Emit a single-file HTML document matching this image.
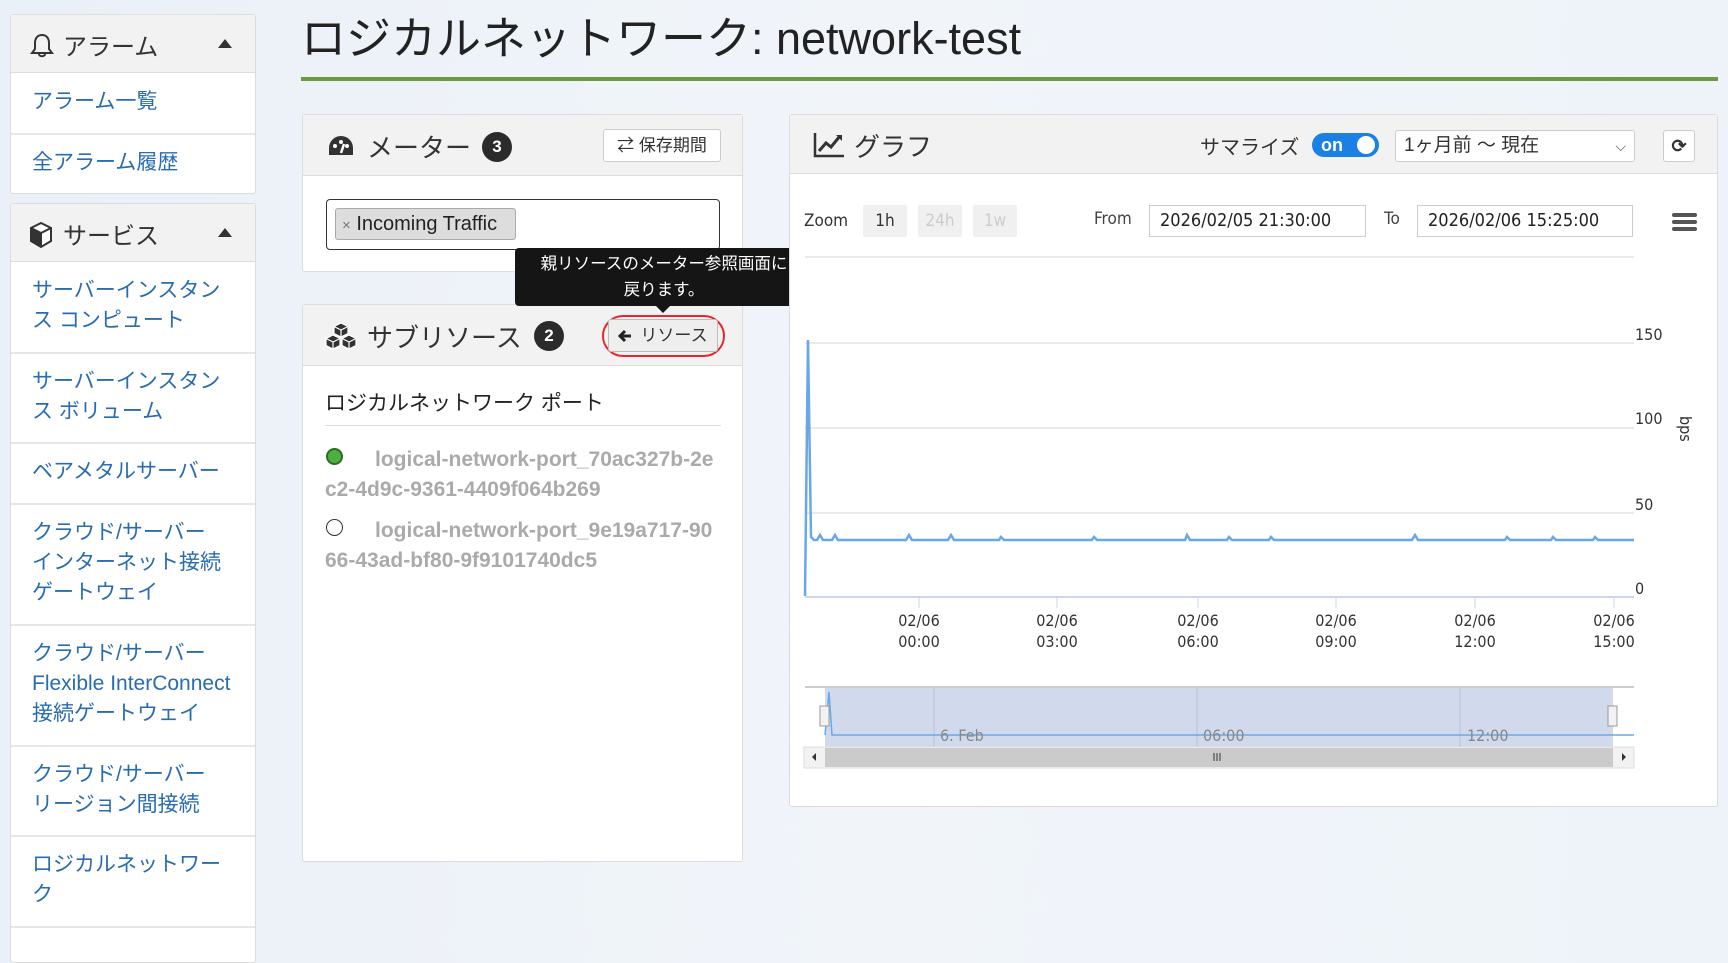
<!DOCTYPE html>
<html><head><meta charset="utf-8">
<style>
*{box-sizing:border-box;margin:0;padding:0}
body{width:1728px;height:940px;overflow:hidden;background:linear-gradient(90deg,#eaf0f7,#f1f5fa 50%,#eef3f9);font-family:"Liberation Sans","Noto Sans CJK JP",sans-serif;position:relative;color:#333}
.a{position:absolute}
.panel{position:absolute;background:#fff;border:1px solid #dcdcdc;border-radius:3px}
.ph{position:absolute;left:0;right:0;top:0;background:#f2f2f2;border-bottom:1px solid #ddd}
.sb a{position:absolute;left:21px;color:#2a6cb0;font-size:21px;line-height:30px;text-decoration:none;white-space:nowrap}
.sep{position:absolute;left:0;right:0;height:2px;background:#e6e6e6}
.badge{position:absolute;width:30px;height:30px;border-radius:50%;background:#2b2b2b;color:#fff;font-weight:bold;font-size:17px;text-align:center;line-height:30px}
.btn{position:absolute;border:1px solid #ccc;border-radius:3px;background:#fff;font-size:17px;text-align:center;white-space:nowrap}
.port{position:absolute;left:22px;width:398px;font-weight:bold;color:#aaa;font-size:21px;line-height:30px;text-indent:50px;word-break:break-all}
.zb{position:absolute;top:205px;height:32px;width:44px;background:#f0f0f0;border-radius:2px;font-size:17px;text-align:center;line-height:32px;font-family:"DejaVu Sans Condensed","Liberation Sans",sans-serif}
.inp{position:absolute;top:205px;height:32px;border:1px solid #ccc;font-size:18px;line-height:30px;padding-left:10px;font-family:"DejaVu Sans Condensed","Liberation Sans",sans-serif;color:#222}
</style></head><body>

<div class="panel sb" style="left:10px;top:14px;width:246px;height:180px">
 <div class="ph" style="height:58px"></div>
 <svg class="a" style="left:18px;top:17px" width="26" height="28" viewBox="0 0 26 28"><path d="M13 3c-5 0-7 4-7 8v6l-3 4h20l-3-4v-6c0-4-2-8-7-8z M10 22c0 3 6 3 6 0" fill="none" stroke="#333" stroke-width="2"/></svg>
 <div class="a" style="left:52px;top:12px;font-size:24px">アラーム</div>
 <div class="a" style="left:207px;top:24px;width:0;height:0;border-left:7px solid transparent;border-right:7px solid transparent;border-bottom:9px solid #333"></div>
 <a style="top:72px">アラーム一覧</a>
 <div class="sep" style="top:118px"></div>
 <a style="top:133px">全アラーム履歴</a>
</div>
<div class="panel sb" style="left:10px;top:203px;width:246px;height:760px">
 <div class="ph" style="height:58px"></div>
 <svg class="a" style="left:17px;top:17px" width="26" height="28" viewBox="0 0 26 28"><path d="M13 2L3 7v13l10 6 10-6V7z" fill="#fff" stroke="#333" stroke-width="2"/><path d="M3 7l10 5 10-5M13 12v14" fill="none" stroke="#333" stroke-width="2"/><path d="M3 7l10 5v14L3 20z" fill="#333"/></svg>
 <div class="a" style="left:52px;top:12px;font-size:24px">サービス</div>
 <div class="a" style="left:207px;top:24px;width:0;height:0;border-left:7px solid transparent;border-right:7px solid transparent;border-bottom:9px solid #333"></div>
 <a style="top:72px">サーバーインスタン<br>ス コンピュート</a>
 <div class="sep" style="top:148px"></div>
 <a style="top:163px">サーバーインスタン<br>ス ボリューム</a>
 <div class="sep" style="top:238px"></div>
 <a style="top:253px">ベアメタルサーバー</a>
 <div class="sep" style="top:299px"></div>
 <a style="top:314px">クラウド/サーバー<br>インターネット接続<br>ゲートウェイ</a>
 <div class="sep" style="top:420px"></div>
 <a style="top:435px">クラウド/サーバー<br>Flexible InterConnect<br>接続ゲートウェイ</a>
 <div class="sep" style="top:541px"></div>
 <a style="top:556px">クラウド/サーバー<br>リージョン間接続</a>
 <div class="sep" style="top:631px"></div>
 <a style="top:646px">ロジカルネットワー<br>ク</a>
 <div class="sep" style="top:722px"></div>
</div>

<div class="a" style="left:301px;top:9px;font-size:45px;line-height:60px;color:#222;white-space:nowrap">ロジカルネットワーク: network-test</div>
<div class="a" style="left:301px;top:77px;width:1417px;height:4px;background:#6b9b3a"></div>

<div class="panel" style="left:302px;top:114px;width:441px;height:158px">
 <div class="ph" style="height:61px"></div>
 <svg class="a" style="left:24px;top:19px" width="28" height="24" viewBox="0 0 28 24"><path d="M14 2A12 12 0 0 0 2 14v7h24v-7A12 12 0 0 0 14 2z" fill="#333"/><circle cx="8" cy="12" r="2" fill="#fff"/><circle cx="14" cy="8" r="2" fill="#fff"/><circle cx="20" cy="12" r="2" fill="#fff"/><path d="M14 19l3-9" stroke="#fff" stroke-width="2.5"/></svg>
 <div class="a" style="left:64px;top:13px;font-size:26px">メーター</div>
 <div class="badge" style="left:179px;top:17px">3</div>
 <div class="btn" style="left:300px;top:14px;width:118px;height:33px;line-height:31px">⇄ 保存期間</div>
 <div class="a" style="left:23px;top:84px;width:394px;height:51px;border:1px solid #333;border-radius:4px"></div>
 <div class="a" style="left:32px;top:93px;width:181px;height:32px;background:#ddd;border:1px solid #aaa;border-radius:3px;font-size:20px;line-height:30px;padding-left:6px;color:#222;white-space:nowrap"><span style="color:#777;font-size:15px">×</span> Incoming Traffic</div>
</div>

<div class="panel" style="left:302px;top:304px;width:441px;height:558px">
 <div class="ph" style="height:61px"></div>
 <svg class="a" style="left:21px;top:17px" width="34" height="28" viewBox="0 0 34 28"><g fill="#333" stroke="#fff" stroke-width="1.2"><path d="M17 1l7 3.5v7l-7 3.5-7-3.5v-7z"/><path d="M9 13l7 3.5v7L9 27l-7-3.5v-7z"/><path d="M25 13l7 3.5v7L25 27l-7-3.5v-7z"/></g><g stroke="#fff" stroke-width="1.2" fill="none"><path d="M10 4.5l7 3.5 7-3.5M17 8v7"/><path d="M2 16.5l7 3.5 7-3.5M9 20v7"/><path d="M18 16.5l7 3.5 7-3.5M25 20v7"/></g></svg>
 <div class="a" style="left:64px;top:13px;font-size:26px">サブリソース</div>
 <div class="badge" style="left:231px;top:16px">2</div>
 <div class="a" style="left:299px;top:10px;width:123px;height:42px;border:2px solid #e8262a;border-radius:21px"></div>
 <div class="btn" style="left:305px;top:14px;width:110px;height:33px;line-height:31px;background:#eee;border-color:#bbb;padding-left:22px">リソース</div>
 <svg class="a" style="left:314px;top:23px" width="16" height="16" viewBox="0 0 16 16"><path d="M14 8H4M8 3L3 8l5 5" fill="none" stroke="#222" stroke-width="3"/></svg>
 <div class="a" style="left:22px;top:82px;font-size:21px;color:#222">ロジカルネットワーク ポート</div>
 <div class="a" style="left:22px;top:120px;width:396px;height:1px;background:#ddd"></div>
 <div class="a" style="left:23px;top:143px;width:17px;height:17px;border-radius:50%;background:#4caf3f;border:2px solid #2d6b26"></div>
 <div class="port" style="top:140px">logical-network-port_70ac327b-2ec2-4d9c-9361-4409f064b269</div>
 <div class="a" style="left:23px;top:214px;width:17px;height:17px;border-radius:50%;border:1.5px solid #333"></div>
 <div class="port" style="top:211px">logical-network-port_9e19a717-9066-43ad-bf80-9f9101740dc5</div>
</div>

<div class="a" style="left:515px;top:248px;width:298px;height:58px;background:#151515;border-radius:4px;color:#fff;font-size:16.5px;line-height:26px;text-align:center;padding-top:3px;white-space:nowrap">親リソースのメーター参照画面に<br>戻ります。</div>
<div class="a" style="left:656px;top:306px;width:0;height:0;border-left:7px solid transparent;border-right:7px solid transparent;border-top:7px solid #151515"></div>

<div class="panel" style="left:789px;top:114px;width:929px;height:693px">
 <div class="ph" style="height:59px"></div>
 <svg class="a" style="left:23px;top:17px" width="32" height="26" viewBox="0 0 32 26"><path d="M2 1v23h29" fill="none" stroke="#333" stroke-width="2.5"/><path d="M6 19l7-8 5 4 9-11" fill="none" stroke="#333" stroke-width="3"/><path d="M23 3h6v6z" fill="#333"/></svg>
 <div class="a" style="left:64px;top:12px;font-size:26px">グラフ</div>
 <div class="a" style="left:410px;top:16px;font-size:20px">サマライズ</div>
 <div class="a" style="left:522px;top:18px;width:67px;height:24px;border-radius:12px;background:#1a80e5;color:#fff;font-weight:bold;font-size:18px;line-height:24px;padding-left:9px">on<div class="a" style="right:4px;top:3px;width:18px;height:18px;border-radius:50%;background:#fff"></div></div>
 <div class="a" style="left:605px;top:15px;width:240px;height:32px;border:1px solid #ccc;border-radius:3px;background:#fff;font-size:19px;line-height:30px;padding-left:8px">1ヶ月前 〜 現在<span class="a" style="right:8px;top:0;font-size:14px;color:#555">&#x2335;</span></div>
 <div class="btn" style="left:873px;top:15px;width:32px;height:32px;line-height:30px;font-size:18px;font-weight:bold">⟳</div>
</div>

<div class="a" style="left:804px;top:211px;font-size:17px;color:#333;font-family:'DejaVu Sans Condensed','Liberation Sans',sans-serif">Zoom</div>
<div class="zb" style="left:863px;color:#333">1h</div>
<div class="zb" style="left:918px;color:#ccc">24h</div>
<div class="zb" style="left:973px;color:#ccc">1w</div>
<div class="a" style="left:1094px;top:209px;font-size:17px;color:#444;font-family:'DejaVu Sans Condensed','Liberation Sans',sans-serif">From</div>
<div class="inp" style="left:1149px;width:217px">2026/02/05 21:30:00</div>
<div class="a" style="left:1384px;top:209px;font-size:17px;color:#444;font-family:'DejaVu Sans Condensed','Liberation Sans',sans-serif">To</div>
<div class="inp" style="left:1417px;width:216px">2026/02/06 15:25:00</div>
<div class="a" style="left:1672px;top:213px;width:25px;height:4px;background:#555;border-radius:2px;box-shadow:0 7px 0 #555,0 14px 0 #555"></div>

<svg class="a" style="left:0;top:0" width="1728" height="940" viewBox="0 0 1728 940">
 <g stroke="#e4e4e4" stroke-width="1.5">
  <line x1="805" y1="257" x2="1634" y2="257"/>
  <line x1="805" y1="343" x2="1634" y2="343"/>
  <line x1="805" y1="428" x2="1634" y2="428"/>
  <line x1="805" y1="513" x2="1634" y2="513"/>
 </g>
 <line x1="805" y1="597" x2="1634" y2="597" stroke="#ccd6eb" stroke-width="2"/>
 <g stroke="#ccd6eb"><line x1="919" y1="598" x2="919" y2="608"/><line x1="1057" y1="598" x2="1057" y2="608"/><line x1="1198" y1="598" x2="1198" y2="608"/><line x1="1336" y1="598" x2="1336" y2="608"/><line x1="1475" y1="598" x2="1475" y2="608"/><line x1="1614" y1="598" x2="1614" y2="608"/></g>
 <path d="M805 596L808 340L811 537L814 540L817 540L820 535L823 540L832 540L835 535L838 540L906 540L909 535L912 540L948 540L951 535L954 540L999 540L1001 537L1004 540L1092 540L1094 537L1097 540L1185 540L1187 535L1190 540L1227 540L1229 537L1232 540L1269 540L1271 537L1274 540L1412 540L1415 535L1418 540L1505 540L1507 537L1510 540L1551 540L1553 537L1556 540L1593 540L1595 537L1598 540L1634 540" fill="none" stroke="#6aa7e6" stroke-width="2.5"/>
 <g font-family="DejaVu Sans Condensed, Liberation Sans, sans-serif" font-size="16" fill="#333">
  <text x="1635" y="340">150</text><text x="1635" y="424">100</text><text x="1635" y="510">50</text><text x="1635" y="594">0</text>
  <g text-anchor="middle">
   <text x="919" y="626">02/06</text><text x="919" y="647">00:00</text>
   <text x="1057" y="626">02/06</text><text x="1057" y="647">03:00</text>
   <text x="1198" y="626">02/06</text><text x="1198" y="647">06:00</text>
   <text x="1336" y="626">02/06</text><text x="1336" y="647">09:00</text>
   <text x="1475" y="626">02/06</text><text x="1475" y="647">12:00</text>
   <text x="1614" y="626">02/06</text><text x="1614" y="647">15:00</text>
  </g>
  <text transform="translate(1680,416) rotate(90)" font-size="16">bps</text>
 </g>
 <line x1="805" y1="687" x2="1634" y2="687" stroke="#ccc" stroke-width="2"/>
 <rect x="825" y="688" width="788" height="59" fill="#ccd6eb" opacity="0.9"/>
 <g stroke="#b8c2d6"><line x1="934" y1="688" x2="934" y2="747"/><line x1="1197" y1="688" x2="1197" y2="747"/><line x1="1460" y1="688" x2="1460" y2="747"/></g>
 <path d="M825 735L829 692L832 735L1634 735" fill="none" stroke="#6aa7e6" stroke-width="1.5"/>
 <g font-family="DejaVu Sans Condensed, Liberation Sans, sans-serif" font-size="16" fill="#888"><text x="940" y="741">6. Feb</text><text x="1203" y="741">06:00</text><text x="1467" y="741">12:00</text></g>
 <rect x="820" y="706" width="9" height="20" fill="#f2f2f2" stroke="#999"/><rect x="1608" y="706" width="9" height="20" fill="#f2f2f2" stroke="#999"/>
 <rect x="804" y="747" width="830" height="21" fill="#f2f2f2" stroke="#ddd"/>
 <rect x="825" y="748" width="788" height="19" fill="#cbcbcb"/>
 <path d="M816 753v8l-4-4z M1622 753v8l4-4z" fill="#333"/>
 <g stroke="#333"><line x1="1214" y1="753" x2="1214" y2="761"/><line x1="1217" y1="753" x2="1217" y2="761"/><line x1="1220" y1="753" x2="1220" y2="761"/></g>
</svg>
</body></html>
